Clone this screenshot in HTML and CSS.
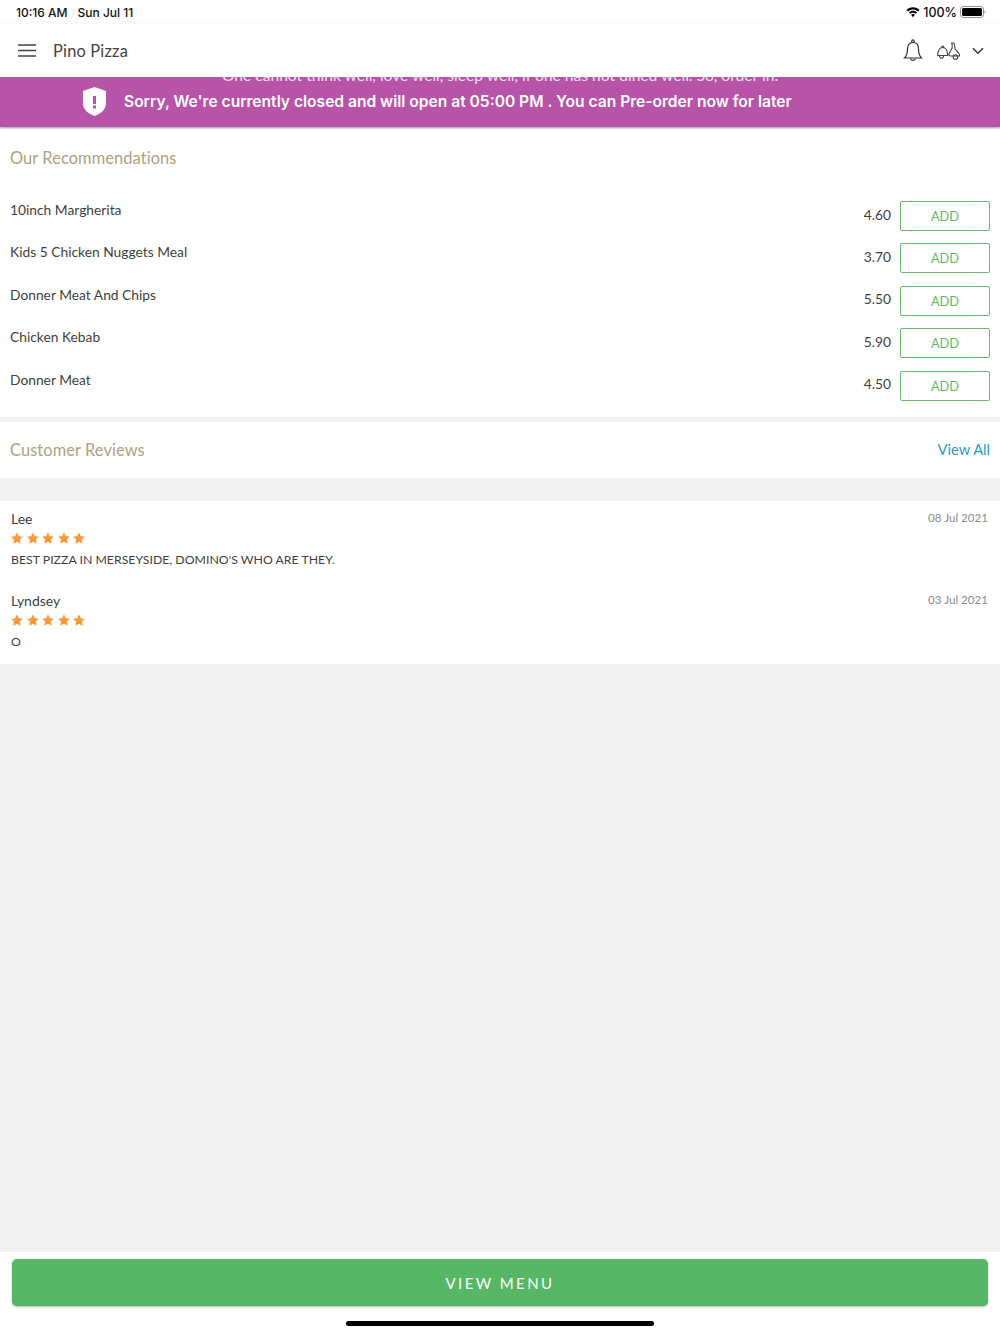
FILE: index.html
```html
<!DOCTYPE html>
<html lang="en">
<head>
<meta charset="utf-8">
<title>Pino Pizza</title>
<link rel="stylesheet" href="styles.css">
</head>
<body>
<svg class="defs" width="0" height="0"><defs><path id="star" d="M6 .3l1.800 3.900 4.200.5-3.100 2.900.8 4.200L6 9.700 2.300 11.800l.8-4.200L0 4.700l4.200-.5z"/></defs></svg>
<div class="page">
  <div class="status">
    <span class="status-time">10:16 AM</span>
    <span class="status-date">Sun Jul 11</span>
    <span class="status-right">
      <svg width="14" height="11" viewBox="0 0 15 11"><path d="M7.500 2.200c2.100 0 4 .8 5.400 2.200l1.600-1.500C12.600 1 10.200 0 7.500 0S2.400 1 .5 2.900l1.600 1.500C3.500 3 5.400 2.200 7.500 2.200z"/><path d="M7.500 5.700c1.100 0 2.100.4 2.900 1.100l1.500-1.500c-1.200-1-2.700-1.700-4.400-1.700s-3.200.7-4.400 1.700l1.500 1.500c.8-.7 1.800-1.100 2.900-1.100z"/><path d="M7.500 7.200c-.8 0-1.500.3-2 .8l2 2.500 2-2.500c-.5-.5-1.200-.8-2-.8z"/></svg>
      <span class="status-pct">100%</span>
      <svg width="26" height="12" viewBox="0 0 26 12"><rect x=".5" y=".5" width="23" height="11" rx="3" fill="none" stroke="#8e8e8e"/><rect x="2" y="2" width="20" height="8" rx="1.500" fill="#000"/><path d="M24.700 4.200v3.600c.6-.3.9-1 .9-1.800s-.3-1.500-.9-1.800z" fill="#8e8e8e"/></svg>
    </span>
  </div>

  <header class="topbar">
    <svg width="18" height="13" viewBox="0 0 18 13"><path d="M0 1h18M0 6.500h18M0 12h18" stroke="#444" stroke-width="1.600" fill="none"/></svg>
    <span class="brand">Pino Pizza</span>
    <span class="top-actions">
      <svg width="20" height="24" viewBox="0 0 20 24" fill="none" stroke="#333" stroke-width="1.200"><path d="M10 3.500c-3.600 0-5.500 2.700-5.500 6.300 0 4.500-.8 7-3 9.200h17c-2.200-2.200-3-4.700-3-9.200 0-3.600-1.900-6.300-5.500-6.300z"/><circle cx="10" cy="2.200" r="1.300"/><path d="M7.500 19.500c.3 2.400 4.700 2.400 5 0"/></svg>
      <svg class="scooter" width="23" height="18" viewBox="0 0 23 18" fill="none" stroke="#444" stroke-width="1.100"><path d="M.7 13.500c.2-5 2.300-8 5-8s4.800 3 5 8z"/><path d="M4.700 5.500c-.2-2 2.200-2 2 0"/><path d="M2.500 13.500c-.3 3.600 4.300 3.600 4 0"/><path d="M14 1h3.500M15 1l.2 5-3 5.500c-.7 1.300 0 2.500 1.500 2.500h9c0-3.500-2.700-4.500-4.400-6.500L17 1"/><circle cx="18.500" cy="15" r="2.300"/></svg>
      <svg class="chev" width="12" height="8" viewBox="0 0 12 8"><path d="M1 1.300l5 5 5-5" fill="none" stroke="#333" stroke-width="1.500"/></svg>
    </span>
  </header>

  <div class="banner">
    <div class="marquee">One cannot think well, love well, sleep well, if one has not dined well. So, order in.</div>
    <div class="banner-main">
      <svg width="23" height="29" viewBox="0 0 23 29"><path d="M11.500 0L0 4v12c0 6 4.700 10.700 11.500 13C18.300 26.700 23 22 23 16V4z" fill="#fff"/><rect x="10" y="9" width="3" height="8" fill="#b754a8"/><rect x="10" y="18.500" width="3" height="3" fill="#b754a8"/></svg>
      <span>Sorry, We're currently closed and will open at 05:00 PM . You can Pre-order now for later</span>
    </div>
  </div>

  <section class="recs">
    <h2 class="section-title recs-title">Our Recommendations</h2>
    <div class="rec-row"><span class="rec-name">10inch Margherita</span><span class="rec-price">4.60</span><button class="add">ADD</button></div>
    <div class="rec-row"><span class="rec-name">Kids 5 Chicken Nuggets Meal</span><span class="rec-price">3.70</span><button class="add">ADD</button></div>
    <div class="rec-row"><span class="rec-name">Donner Meat And Chips</span><span class="rec-price">5.50</span><button class="add">ADD</button></div>
    <div class="rec-row"><span class="rec-name">Chicken Kebab</span><span class="rec-price">5.90</span><button class="add">ADD</button></div>
    <div class="rec-row"><span class="rec-name">Donner Meat</span><span class="rec-price">4.50</span><button class="add">ADD</button></div>
  </section>

  <section class="reviews-head">
    <h2 class="section-title">Customer Reviews</h2>
    <a class="view-all">View All</a>
  </section>

  <section class="reviews">
    <article class="review">
      <div class="review-top"><span class="review-name">Lee</span><span class="review-date">08 Jul 2021</span></div>
      <div class="stars"><svg width="12" height="12" viewBox="0 0 12 12"><use href="#star"/></svg><svg width="12" height="12" viewBox="0 0 12 12"><use href="#star"/></svg><svg width="12" height="12" viewBox="0 0 12 12"><use href="#star"/></svg><svg width="12" height="12" viewBox="0 0 12 12"><use href="#star"/></svg><svg width="12" height="12" viewBox="0 0 12 12"><use href="#star"/></svg></div>
      <p class="review-text">BEST PIZZA IN MERSEYSIDE, DOMINO'S WHO ARE THEY.</p>
    </article>
    <article class="review">
      <div class="review-top"><span class="review-name">Lyndsey</span><span class="review-date">03 Jul 2021</span></div>
      <div class="stars"><svg width="12" height="12" viewBox="0 0 12 12"><use href="#star"/></svg><svg width="12" height="12" viewBox="0 0 12 12"><use href="#star"/></svg><svg width="12" height="12" viewBox="0 0 12 12"><use href="#star"/></svg><svg width="12" height="12" viewBox="0 0 12 12"><use href="#star"/></svg><svg width="12" height="12" viewBox="0 0 12 12"><use href="#star"/></svg></div>
      <p class="review-text">O</p>
    </article>
  </section>

  <div class="spacer"></div>

  <footer class="footer">
    <button class="view-menu">VIEW MENU</button>
    <div class="home-bar"></div>
  </footer>
</div>
</body>
</html>
```
FILE: styles.css
```css
* { box-sizing: border-box; }
html, body { margin: 0; padding: 0; }
body { background: #f1f1f1; font-family: "Lato", "Liberation Sans", sans-serif; color: #3f3f3f; }
.defs { display: block; height: 0; }
.page { width: 1000px; height: 1334px; display: flex; flex-direction: column; overflow: hidden; }

.status { height: 24px; flex: none; background: #fff; display: flex; align-items: center; padding: 0 14px 0 16px; font: 500 12px "Inter", "Liberation Sans", sans-serif; color: #111; }
.status-date { margin-left: 10px; }
.status-right { margin-left: auto; display: flex; align-items: center; gap: 3px; }
.status-pct { font-size: 12.500px; }

.topbar { height: 53px; flex: none; background: #fff; display: flex; align-items: center; padding: 0 16px 0 18px; position: relative; z-index: 2; box-shadow: 0 -2px 3px rgba(0,0,0,.025); }
.brand { margin-left: 17px; font-size: 16.400px; letter-spacing: .2px; color: #444; }
.top-actions { margin-left: auto; display: flex; align-items: center; }
.scooter { margin-left: 14px; }
.chev { margin-left: 12px; }

.banner { height: 50px; flex: none; background: #b754a8; box-shadow: 0 1px 2px rgba(0,0,0,.4); color: #fff; position: relative; overflow: hidden; z-index: 1; }
.marquee { position: absolute; top: -12px; left: 0; right: 0; text-align: center; font-size: 15.640px; line-height: 20px; color: #f3e0ef; }
.banner-main { display: flex; align-items: center; height: 100%; padding: 0 0 1px 83px; gap: 18px; font: 600 15.580px "Inter", "Liberation Sans", sans-serif; }

.recs { height: 290px; flex: none; background: #fff; padding: 0 10px; }
.section-title { margin: 0; font-size: 16.400px; font-weight: 400; color: #b0a180; letter-spacing: .1px; }
.recs-title { padding-top: 21px; height: 71px; line-height: 20px; }
.rec-row { height: 42.400px; display: flex; align-items: flex-start; }
.rec-name { flex: 1; font-size: 13.800px; line-height: 20px; padding-top: 2px; }
.rec-price { font-size: 13.800px; line-height: 20px; margin-right: 9px; padding-top: 6.500px; }
.add { width: 90px; height: 30px; margin-top: 3px; background: #fff; border: 1px solid #62bd6e; border-radius: 2px; color: #5cbb68; font: 400 12.800px "Lato", sans-serif; padding: 0; }

.reviews-head { height: 56px; flex: none; margin-top: 5px; background: #fff; display: flex; align-items: center; justify-content: space-between; padding: 0 10px 2px; }
.view-all { font-size: 14.700px; color: #2b9bc9; }

.reviews { height: 163px; flex: none; margin-top: 23px; background: #fff; padding: 8px 12px 0 11px; }
.review { height: 81.500px; }
.review-top { display: flex; justify-content: space-between; height: 20px; align-items: flex-start; }
.review-name { font-size: 14px; line-height: 20px; }
.review-date { font-size: 11.600px; line-height: 18px; color: #8c8c8c; }
.stars { display: flex; gap: 3.500px; height: 18px; align-items: center; fill: #f89a3a; }
.review-text { margin: 4px 0 0; font-size: 12.300px; line-height: 18px; color: #3f3f3f; }

.spacer { flex: 1; }

.footer { height: 82px; flex: none; background: #fff; position: relative; padding: 7px 12px 0; }
.view-menu { display: block; width: 100%; height: 47px; border: 0; border-radius: 5px; background: #56b766; box-shadow: 0 1px 2px rgba(0,0,0,.3); color: #fff; font: 400 15px "Lato", sans-serif; letter-spacing: 2.400px; padding: 0; }
.home-bar { position: absolute; left: 346px; bottom: 8px; width: 308px; height: 5px; border-radius: 3px; background: #000; }
```
